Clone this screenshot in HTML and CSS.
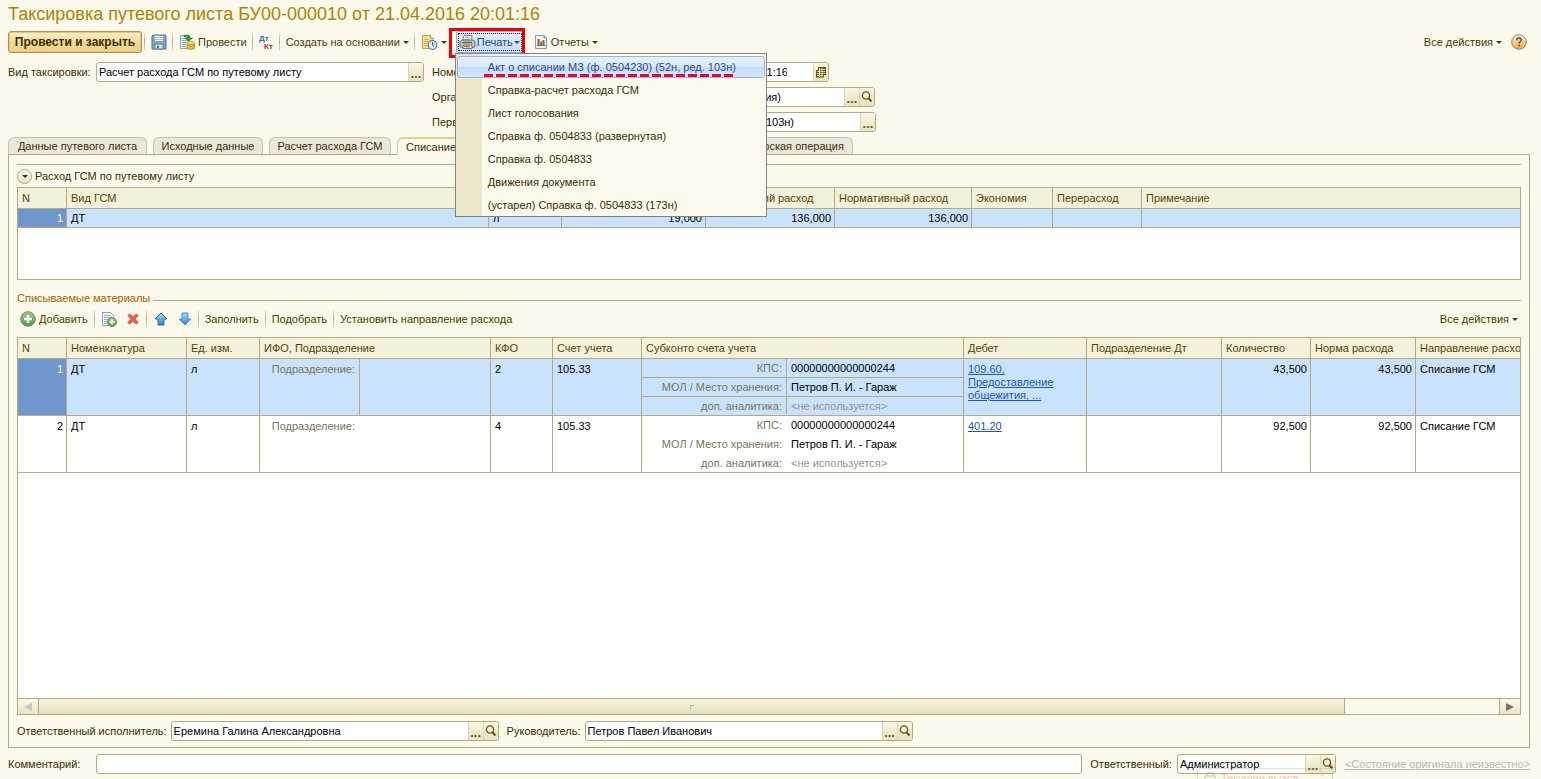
FILE: index.html
```html
<!DOCTYPE html>
<html lang="ru">
<head>
<meta charset="utf-8">
<title>Таксировка путевого листа</title>
<link rel="stylesheet" href="styles.css">
</head>
<body>
<svg class="defs" aria-hidden="true">
  <defs>
    <linearGradient id="blue" x1="0" y1="0" x2="0" y2="1"><stop offset="0" stop-color="#a9d8f5"/><stop offset="1" stop-color="#2f86c6"/></linearGradient>
    <linearGradient id="green" x1="0" y1="0" x2="0" y2="1"><stop offset="0" stop-color="#9ccf7c"/><stop offset="1" stop-color="#4c9c3c"/></linearGradient>
    <linearGradient id="orange" x1="0" y1="0" x2="0" y2="1"><stop offset="0" stop-color="#fff0d8"/><stop offset="1" stop-color="#f5a83e"/></linearGradient>
    <symbol id="lens" viewBox="0 0 12 12"><circle cx="5" cy="4.5" r="3.6" fill="none" stroke="#6b5512" stroke-width="1.4"/><path d="M7.5 7.2l3 3.2" stroke="#6b5512" stroke-width="2.2"/></symbol>
  </defs>
</svg>
<header>
  <h1 class="title">Таксировка путевого листа БУ00-000010 от 21.04.2016 20:01:16</h1>
</header>
<nav class="bar main-bar" aria-label="Команды документа">
  <button class="primary">Провести и закрыть</button>
  <i class="sep"></i>
  <button class="cmd" aria-label="Записать"><svg width="16" height="16" viewBox="0 0 16 16"><path d="M1 2l1-1h12.500l.5 1v13H1z" fill="#7fa6c9" stroke="#4c7196"/><path d="M3.500 1.500h9v6h-9z" fill="#f2f6fa" stroke="#88a5c0"/><path d="M4 3.500h8M4 5.500h8" stroke="#a8bccf"/><path d="M4 10h8v5H4z" fill="#dde7f0" stroke="#56799b"/><path d="M6 11.500h2v3H6z" fill="#4c7196"/></svg></button>
  <i class="sep"></i>
  <button class="cmd"><svg width="16" height="16" viewBox="0 0 16 16"><path d="M1.500 1.500h8.500v13H1.500z" fill="#f1f5f8" stroke="#8ea5ba"/><path d="M3 4.500h3M3 6.500h4M3 8.500h4M3 10.500h4M3 12.500h4" stroke="#87a4bd"/><path d="M5 1.200h3.500q2.500 0 2.500 2.800h2.500L9.500 7.500 6 4h2.500q0-1.400-1.500-1.400H5z" fill="#2fa02f" stroke="#17751d" stroke-width=".6"/><path d="M8 9v5.500q3.500 2 7.500 0V9" fill="#e8bd3f" stroke="#b88a1c" stroke-width=".8"/><ellipse cx="11.700" cy="9" rx="3.700" ry="1.400" fill="#fbe796" stroke="#b88a1c" stroke-width=".7"/><path d="M8 11.500q3.500 1.600 7.500 0" fill="none" stroke="#b88a1c" stroke-width=".8"/></svg>Провести</button>
  <i class="sep"></i>
  <button class="cmd" aria-label="Дт Кт"><svg width="15" height="18" viewBox="0 0 15 18"><text x="0" y="8" class="dt">Дт</text><text x="5" y="16" class="kt">Кт</text></svg></button>
  <i class="sep"></i>
  <button class="cmd">Создать на основании<span class="caret"></span></button>
  <i class="sep"></i>
  <button class="cmd" aria-label="Отложенное"><svg width="17" height="16" viewBox="0 0 17 16"><path d="M1.500 1.500h8l3 3v10h-11z" fill="#f7dc91" stroke="#c9a24b"/><path d="M9.500 1.500v3h3" fill="#fff3cc" stroke="#c9a24b"/><path d="M3 5.500h5M3 7.500h5M3 9.500h4M3 11.500h3" stroke="#d6b15e"/><circle cx="11.500" cy="11" r="4.300" fill="#eaf3fb" stroke="#5680ad" stroke-width="1.200"/><path d="M11.500 11V7.500a3.500 3.500 0 0 1 3.300 3.500z" fill="#b9d3ec"/><path d="M11.500 8v3l1.500 2" fill="none" stroke="#37618f"/></svg><span class="caret"></span></button>
  <div class="print">
    <button class="cmd print-btn" aria-haspopup="menu" aria-expanded="true"><svg width="17" height="16" viewBox="0 0 17 16"><path d="M3.500 7L5 1.500h8L12.500 7z" fill="#fff" stroke="#7c7c7c"/><path d="M6 3.500h5M5.500 5.500h5" stroke="#b9b9b9"/><path d="M1 7.500l2-1.500h11l2 1.500v5l-2 1H3l-2-1z" fill="#c9c5bb" stroke="#6d6a63"/><path d="M3 8.500h10" stroke="#65625b" stroke-width="1.500"/><path d="M4 11h9v3.500H4z" fill="#e8e5de" stroke="#77746c"/><path d="M5 12.500h2" stroke="#58a65c"/><path d="M7 12.500h4" stroke="#df5a2b" stroke-width="1.500"/></svg>Печать<span class="caret"></span></button>
    <div class="menu" role="menu">
      <button role="menuitem" class="item hot">Акт о списании МЗ (ф. 0504230) (52н, ред. 103н)</button>
      <button role="menuitem" class="item">Справка-расчет расхода ГСМ</button>
      <button role="menuitem" class="item">Лист голосования</button>
      <button role="menuitem" class="item">Справка ф. 0504833 (развернутая)</button>
      <button role="menuitem" class="item">Справка ф. 0504833</button>
      <button role="menuitem" class="item">Движения документа</button>
      <button role="menuitem" class="item">(устарел) Справка ф. 0504833 (173н)</button>
      <i class="dashes"></i>
    </div>
    <i class="frame"></i>
  </div>
  <button class="cmd"><svg width="14" height="16" viewBox="0 0 14 16"><path d="M1.500 1.500h9l2 2v11h-11z" fill="#f4f8fb" stroke="#7d9bb8"/><path d="M10 1.500v2.500h2.500" fill="#d9e5ef" stroke="#7d9bb8"/><path d="M4.500 5v6" stroke="#d33a2c" stroke-width="2"/><path d="M7 7.500v3.500" stroke="#3d9a3f" stroke-width="2"/><path d="M9.500 6v5" stroke="#c8471f" stroke-width="2"/><path d="M3 11.500h8.500" stroke="#55718c"/></svg>Отчеты<span class="caret"></span></button>
  <button class="cmd push">Все действия<span class="caret"></span></button>
  <button class="cmd help" aria-label="Справка"><svg width="16" height="16" viewBox="0 0 16 16"><circle cx="8" cy="8" r="7.300" fill="url(#orange)" stroke="#8d8676"/><path d="M5.800 6.200Q5.800 4 8 4t2.200 2q0 1.200-1.300 1.900Q8 8.400 8 9.500" fill="none" stroke="#5f4d38" stroke-width="1.500"/><path d="M7.200 10.800h1.600v1.500H7.200z" fill="#5f4d38"/></svg></button>
</nav>

<form class="fields">
  <label class="lab" for="kind">Вид таксировки:</label>
  <div class="field"><input id="kind" value="Расчет расхода ГСМ по путевому листу"><button type="button" class="fb dots" aria-label="Выбрать">...</button></div>
  <label class="lab" for="num">Номер:</label>
  <div class="pair">
    <div class="field num"><input id="num" value="БУ00-000010"></div>
    <label for="date">от:</label>
    <div class="field date"><input id="date" value="21.04.2016 20:01:16"><button type="button" class="fb" aria-label="Календарь"><svg width="12" height="13" viewBox="0 0 12 13"><path d="M3 1h8v8H9v2.500H1V4h2z" fill="#6b5512"/><path d="M4 3.500h6M2 5.500h8M2 7.500h8M2 9.500h6M4.500 2v9M7 2v9" stroke="#f3efd5" stroke-width=".8"/></svg></button></div>
  </div>
  <label class="lab third" for="org">Организация:</label>
  <div class="field org"><input id="org" value="Учреждение (организация)"><button type="button" class="fb dots" aria-label="Выбрать">...</button><button type="button" class="fb" aria-label="Открыть"><svg width="12" height="12"><use href="#lens"/></svg></button></div>
  <label class="lab third" for="doc">Первичный документ:</label>
  <div class="field doc"><input id="doc" value="Акт (ф. 0504230) (52н, ред. 103н)"><button type="button" class="fb dots" aria-label="Выбрать">...</button></div>
</form>

<div class="tabs" role="tablist">
  <button role="tab" class="tab">Данные путевого листа</button>
  <button role="tab" class="tab">Исходные данные</button>
  <button role="tab" class="tab">Расчет расхода ГСМ</button>
  <button role="tab" class="tab active" aria-selected="true">Списание материалов</button>
  <button role="tab" class="tab">Списание</button>
  <button role="tab" class="tab">Бухгалтерская операция</button>
</div>

<main class="panel">
  <section class="group">
    <h2 class="group-head"><button class="round" aria-label="Свернуть"><span class="caret"></span></button>Расход ГСМ по путевому листу</h2>
    <div class="grid-box fuel">
      <table>
        <colgroup><col class="w49"><col class="w422"><col class="w73"><col class="w144"><col class="w129"><col class="w137"><col class="w81"><col class="w89"><col></colgroup>
        <thead><tr><th>N</th><th>Вид ГСМ</th><th>Ед. изм.</th><th>Расход</th><th>Фактический расход</th><th>Нормативный расход</th><th>Экономия</th><th>Перерасход</th><th>Примечание</th></tr></thead>
        <tbody><tr class="sel"><td class="n">1</td><td>ДТ</td><td>л</td><td class="r">19,000</td><td class="r">136,000</td><td class="r">136,000</td><td></td><td></td><td></td></tr></tbody>
      </table>
    </div>
  </section>

  <section class="materials">
    <h2 class="legend">Списываемые материалы</h2>
    <div class="bar mat-bar">
      <button class="cmd"><svg width="16" height="16" viewBox="0 0 16 16"><circle cx="8" cy="8" r="7.300" fill="url(#green)" stroke="#7d8b76"/><path d="M8 4v8M4 8h8" stroke="#fff" stroke-width="2.600"/></svg>Добавить</button>
      <i class="sep"></i>
      <button class="cmd" aria-label="Скопировать"><svg width="16" height="16" viewBox="0 0 16 16"><path d="M1.500 1.500h8l3 3v10h-11z" fill="#f1f5f9" stroke="#8ba3ba"/><path d="M3 4.500h6M3 6.500h8M3 8.500h6M3 10.500h4M3 12.500h3" stroke="#9bb2c6"/><circle cx="11" cy="11" r="4.500" fill="url(#green)" stroke="#6f8a64"/><path d="M11 8.500v5M8.500 11h5" stroke="#fff" stroke-width="1.600"/></svg></button>
      <button class="cmd gap" aria-label="Удалить"><svg width="12" height="14" viewBox="0 0 14 14"><path d="M3 1l4 3.500L11 1l2 2-3.500 4L13 11l-2 2-4-3.500L3 13l-2-2 3.500-4L1 3z" fill="#f0634b" stroke="#cf4433" stroke-width=".8"/></svg></button>
      <i class="sep wide"></i>
      <button class="cmd" aria-label="Вверх"><svg width="14" height="14" viewBox="0 0 14 14"><path d="M7 1l6 6h-3v6H4V7H1z" fill="url(#blue)" stroke="#2d6ea5"/></svg></button>
      <button class="cmd gap" aria-label="Вниз"><svg width="14" height="14" viewBox="0 0 14 14"><path d="M7 13L1 7h3V1h6v6h3z" fill="url(#blue)" stroke="#4a8fc4"/></svg></button>
      <i class="sep"></i>
      <button class="cmd">Заполнить</button>
      <i class="sep"></i>
      <button class="cmd">Подобрать</button>
      <i class="sep"></i>
      <button class="cmd">Установить направление расхода</button>
      <button class="cmd push">Все действия<span class="caret"></span></button>
    </div>
    <div class="grid-box mats">
      <table>
        <colgroup><col class="w49"><col class="w120"><col class="w73"><col class="w231"><col class="w62"><col class="w89"><col class="w322"><col class="w123"><col class="w135"><col class="w89"><col class="w105"><col></colgroup>
        <thead><tr><th>N</th><th>Номенклатура</th><th>Ед. изм.</th><th>ИФО, Подразделение</th><th>КФО</th><th>Счет учета</th><th>Субконто счета учета</th><th>Дебет</th><th>Подразделение Дт</th><th>Количество</th><th>Норма расхода</th><th>Направление расхода</th></tr></thead>
        <tbody>
          <tr class="sel"><td class="n">1</td><td>ДТ</td><td>л</td>
            <td class="nest"><div class="dept"><span>Подразделение:</span></div></td><td>2</td><td>105.33</td>
            <td class="nest"><dl class="sub"><dt>КПС:</dt><dd>00000000000000244</dd><dt>МОЛ / Место хранения:</dt><dd>Петров П. И. - Гараж</dd><dt>доп. аналитика:</dt><dd class="dim">&lt;не используется&gt;</dd></dl></td>
            <td><a href="#">109.60, Предоставление общежития, ...</a></td><td></td><td class="r">43,500</td><td class="r">43,500</td><td>Списание ГСМ</td></tr>
          <tr><td class="n">2</td><td>ДТ</td><td>л</td>
            <td class="nest"><div class="dept"><span>Подразделение:</span></div></td><td>4</td><td>105.33</td>
            <td class="nest"><dl class="sub"><dt>КПС:</dt><dd>00000000000000244</dd><dt>МОЛ / Место хранения:</dt><dd>Петров П. И. - Гараж</dd><dt>доп. аналитика:</dt><dd class="dim">&lt;не используется&gt;</dd></dl></td>
            <td><a href="#">401.20</a></td><td></td><td class="r">92,500</td><td class="r">92,500</td><td>Списание ГСМ</td></tr>
        </tbody>
      </table>
      <div class="scroll">
        <button class="arrow off" aria-label="Влево"><svg width="8" height="8" viewBox="0 0 8 8"><path d="M8 0v8L0 4z" fill="#c9c7bb"/></svg></button>
        <div class="track"><div class="thumb"><i></i></div></div>
        <button class="arrow" aria-label="Вправо"><svg width="8" height="8" viewBox="0 0 8 8"><path d="M0 0v8l8-4z" fill="#77756a"/></svg></button>
      </div>
    </div>
  </section>

  <div class="signers">
    <label for="exec">Ответственный исполнитель:</label>
    <div class="field who"><input id="exec" value="Еремина Галина Александровна"><button class="fb dots" aria-label="Выбрать">...</button><button class="fb" aria-label="Открыть"><svg width="12" height="12"><use href="#lens"/></svg></button></div>
    <label for="head" class="second">Руководитель:</label>
    <div class="field who"><input id="head" value="Петров Павел Иванович"><button class="fb dots" aria-label="Выбрать">...</button><button class="fb" aria-label="Открыть"><svg width="12" height="12"><use href="#lens"/></svg></button></div>
  </div>
</main>

<footer class="foot">
  <label class="lab" for="comment">Комментарий:</label>
  <div class="field grow"><input id="comment"></div>
  <label class="resp" for="resp">Ответственный:</label>
  <div class="field admin"><input id="resp" value="Администратор"><button class="fb dots" aria-label="Выбрать">...</button><button class="fb" aria-label="Открыть"><svg width="12" height="12"><use href="#lens"/></svg></button></div>
  <a class="state" href="#">&lt;Состояние оригинала неизвестно&gt;</a>
  <div class="ghost"><svg width="12" height="12" viewBox="0 0 12 12"><path d="M1 5h10v5H1zM3 2h6v3H3z" fill="none" stroke="#8c8a80" stroke-width="2"/></svg><span>Текущие вызов</span><svg width="8" height="8" viewBox="0 0 8 8"><path d="M0 2l4 4 4-4z" fill="#e0a53a"/></svg></div>
</footer>
</body>
</html>
```
FILE: styles.css
```css
:root {
  --bg: #fbf9eb;
  --line: #b3aa7f;
  --ink: #3b2d04;
  --cmd: #4b3a02;
  --sel: #c9e3ff;
}
* { box-sizing: border-box; }
body {
  margin: 0;
  padding: 4px 11px 5px 8px;
  min-height: 100vh;
  display: flex;
  flex-direction: column;
  background: var(--bg);
  color: var(--ink);
  font: 11px/14px "Liberation Sans", Arial, sans-serif;
  overflow-x: hidden;
}
.defs { position: absolute; width: 0; height: 0; }
h1, h2, dl, dd { margin: 0; font-weight: normal; font-size: 11px; }
button, input { font: inherit; color: inherit; }
button { margin: 0; padding: 0; border: 0; background: none; white-space: nowrap; }
svg { display: block; flex: none; }
.title { font-size: 18px; line-height: 20px; color: #b18300; white-space: nowrap; }

/* command bars */
.bar { display: flex; align-items: center; height: 22px; }
.main-bar { margin-top: 7px; }
.primary {
  width: 134px; height: 22px;
  border: 1px solid #b3914a; border-radius: 3px;
  box-shadow: inset 0 0 0 1px #e5c57c;
  background: linear-gradient(#fdf0c9, #f0d898 55%, #eed08a);
  font-weight: bold; font-size: 12px;
}
.sep { width: 1px; height: 18px; margin: 0 6px; background: linear-gradient(#e9e4cb, #b3aa7f, #e9e4cb); }
.main-bar .sep { margin-left: 5px; }
.main-bar .primary + .sep { margin-left: 2px; }
.wide { margin: 0 7px; }
.cmd { display: flex; align-items: center; gap: 3px; color: var(--cmd); }
.caret { border: 3px solid transparent; border-top-color: currentColor; border-bottom: 0; }
.push { margin-left: auto; }
.help { margin: 0 3px 0 9px; }
.gap { margin-left: 10px; }
.dt { font: bold 8px "Liberation Sans", sans-serif; fill: #33709f; }
.kt { font: bold 8px "Liberation Sans", sans-serif; fill: #c3281c; }

.print { position: relative; margin: 0 10px 0 9px; }
.print-btn {
  height: 22px; width: 68px; padding-left: 2px; gap: 1px;
  border: 1px solid #8fb0ea; border-radius: 2px;
  outline: 1px dotted #222; outline-offset: -3px;
  background: linear-gradient(#e3efff, #c3ddff);
  color: #2e458f;
}
.frame { position: absolute; left: -7px; top: -3px; width: 76px; height: 30px; border: 3px solid #f40000; pointer-events: none; }
.menu {
  position: absolute; left: -1px; top: 22px; z-index: 5;
  width: 312px; padding: 2px 1px 0;
  border: 1px solid #85837b;
  background: linear-gradient(90deg, #ede7cb 26px, #fcfaed 26px);
}
.item { display: block; width: 100%; height: 22px; margin-bottom: 1px; padding-left: 30px; text-align: left; border: 1px solid transparent; border-radius: 3px; }
.item:last-of-type { margin-bottom: 0; }
.item.hot { border-color: #94b3ea; background: linear-gradient(#e6f1ff, #d8e9ff 50%, #c3dfff 51%, #d2e7ff); color: #2e458f; }
.dashes { position: absolute; left: 28px; top: 20px; width: 249px; height: 3px; background: repeating-linear-gradient(90deg, #e8082a 0 9px, transparent 9px 12px); }

/* fields */
.fields {
  display: grid;
  grid-template-columns: 88px 328px 136px 316px;
  row-gap: 5px;
  margin-top: 9px;
}
.fields > *, .signers, .foot { align-items: center; }
.lab { line-height: 20px; white-space: nowrap; }
.lab + .field + .lab, .third { padding-left: 8px; }
.third { grid-column: 3; }
.pair { display: flex; gap: 4px; width: 269px; }
.num { width: 100px; }
.date { width: 145px; margin-left: auto; }
.field {
  display: flex; height: 20px; min-width: 0; overflow: hidden;
  border: 1px solid var(--line); border-radius: 3px; background: #fff;
}
.fields .field { align-items: stretch; }
.field input { flex: 1; min-width: 0; width: 0; padding: 0 2px; border: 0; outline: 0; background: none; color: #000; }
.org { width: 315px; }
.org input { text-align: right; padding-right: 63px; }
.doc input { text-align: right; padding-right: 66px; }
.date input { text-align: right; padding-right: 26px; }
.fb {
  display: flex; align-items: center; justify-content: center;
  width: 15px; border-left: 1px solid #dcd6b5;
  background: linear-gradient(#fbf8e6, #efebcf 50%, #e9e4c4);
  font-weight: bold; color: #6b5512;
}
.dots { padding-top: 3px; font-size: 13px; }

/* tabs */
.tabs {
  display: grid;
  grid-template-columns: 139px 110px 122px 160px 140px 144px;
  column-gap: 6px;
  margin-top: 5px;
}
.tab {
  height: 18px; margin-bottom: -1px; border: 1px solid #c9c4ac; border-bottom-color: var(--line); border-radius: 6px 6px 0 0;
  background: #ebe8db; color: var(--ink); overflow: hidden;
}
.tab.active { background: var(--bg); border-bottom-color: var(--bg); border-top: 2px solid #e9cd85; text-align: left; padding-left: 8px; z-index: 1; }
.panel {
  flex: 1; display: flex; flex-direction: column;
  padding: 9px 8px 6px;
  border: 1px solid var(--line);
}
.group { border-top: 1px solid var(--line); }
.group-head { display: flex; align-items: center; gap: 3px; height: 22px; }
.round { width: 15px; height: 15px; display: grid; place-items: center; border: 1px solid var(--line); border-radius: 50%; background: linear-gradient(#fff, #e6e0c0); }

.grid-box { border: 1px solid var(--line); background: #fff; overflow: hidden; }
.fuel { height: 93px; }
table { width: 100%; table-layout: fixed; border-collapse: separate; border-spacing: 0; }
th, td { padding: 0 4px; text-align: left; font-weight: normal; vertical-align: top; border-right: 1px solid var(--line); border-bottom: 1px solid var(--line); overflow: hidden; }
th:last-child, td:last-child { border-right: 0; }
th { height: 21px; line-height: 20px; background: #f3f0dc; color: #5a4300; white-space: nowrap; }
td { height: 19px; line-height: 18px; color: #000; }
.r, .n { text-align: right; padding-right: 3px; }
.sel { background: var(--sel); }
.sel .n { background: #6f97ce; color: #fff; }
.w49 { width: 49px; } .w62 { width: 62px; } .w73 { width: 73px; } .w81 { width: 81px; }
.w89 { width: 89px; } .w105 { width: 105px; } .w120 { width: 120px; } .w123 { width: 123px; }
.w129 { width: 129px; } .w135 { width: 135px; } .w137 { width: 137px; } .w144 { width: 144px; }
.w231 { width: 231px; } .w322 { width: 322px; } .w422 { width: 422px; }

.materials { flex: 1; display: flex; flex-direction: column; margin-top: 11px; }
.legend { display: flex; align-items: center; gap: 3px; color: #a06400; }
.legend::after { content: ""; flex: 1; height: 1px; margin-top: 4px; background: var(--line); }
.mat-bar { margin: 3px 0 7px; padding: 0 3px; }
.mats { flex: 1; display: flex; flex-direction: column; }
.mats td { height: 57px; padding-top: 1px; }
.mats td.nest { padding: 0; }
.mats a { display: block; padding-top: 3px; line-height: 13px; color: #1b57b5; }
.dept { width: 100px; height: 56px; padding: 1px 4px 0; text-align: right; color: #7b7656; border-right: 1px solid transparent; }
.sel .dept { border-right-color: var(--line); }
.sub { display: grid; grid-template-columns: 145px 1fr; grid-template-rows: 19px 19px 18px; line-height: 17px; }
.sub dt, .sub dd { padding-top: 1px; border-bottom: 1px solid transparent; }
.sub dt { padding-right: 4px; text-align: right; color: #7b7656; border-right: 1px solid transparent; }
.sub dd { padding-left: 4px; }
.sub .dim { color: #949494; }
.sel .sub dt { border-right-color: var(--line); }
.sel .sub dt:not(:nth-of-type(3)), .sel .sub dd:not(:nth-of-type(3)) { border-bottom-color: var(--line); }

.scroll { display: flex; height: 16px; margin-top: auto; border-top: 1px solid var(--line); background: var(--bg); }
.arrow { width: 21px; display: grid; place-items: center; border-left: 1px solid var(--line); background: linear-gradient(#fbf9ea, #e9e4c6); }
.arrow.off { border-left: 0; border-right: 1px solid var(--line); }
.track { flex: 1; display: grid; grid-template-columns: 17fr 2fr; }
.thumb { display: grid; place-items: center; border-right: 1px solid var(--line); background: linear-gradient(#f8f5df, #efead0 45%, #e6dfbb); }
.thumb i { width: 4px; height: 4px; border: 1px solid #c3bc98; border-right: 0; border-bottom: 0; }

.signers { display: flex; gap: 4px; margin-top: 6px; }
.who { width: 328px; }
.second { margin-left: 4px; }

.foot { position: relative; display: flex; margin-top: 6px; }
.foot .lab { width: 88px; }
.grow { flex: 1; }
.resp { margin: 0 5px 0 8px; }
.admin { width: 159px; }
.state { margin-left: 9px; color: #b9b9ae; }
.ghost {
  position: absolute; right: 197px; bottom: -5px; width: 136px; height: 11px;
  display: flex; align-items: flex-start; gap: 5px; padding: 2px 6px 0; overflow: hidden;
  border: 1px solid #8c8a80; border-bottom: 0; border-radius: 4px 4px 0 0;
  opacity: .25; color: #f02818; pointer-events: none;
}
.ghost span { flex: 1; white-space: nowrap; }
```
